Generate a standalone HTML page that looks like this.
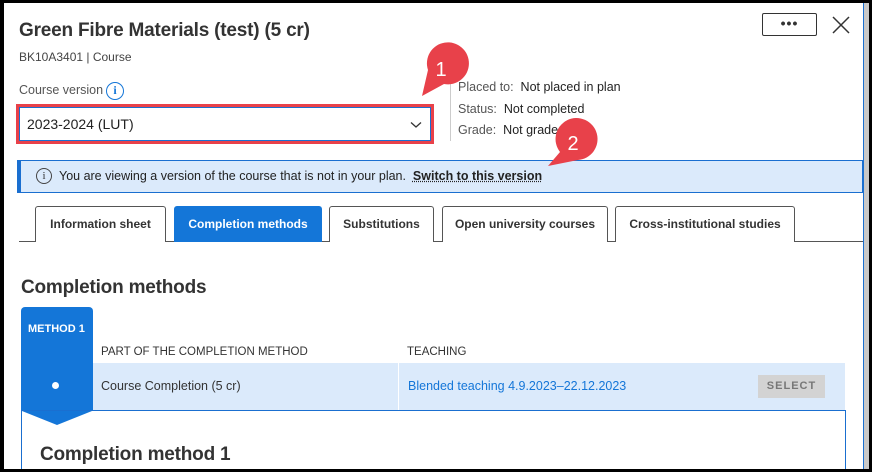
<!DOCTYPE html>
<html><head><style>
*{box-sizing:border-box;margin:0;padding:0}
body{width:872px;height:472px;background:#000;position:relative;overflow:hidden;font-family:"Liberation Sans",sans-serif;color:#333}
.page{position:absolute;left:4px;top:3px;width:860px;height:466px;background:#fff;border-right:1px solid #1a6fd0;overflow:hidden}
.sb{position:absolute;left:864px;top:3px;width:5px;height:466px;background:#c8c8c8}
.a{position:absolute;white-space:nowrap}
.tab{position:absolute;top:203px;height:36px;border:1px solid #555;border-bottom:none;border-radius:3px 3px 0 0;font-size:12px;font-weight:bold;text-align:center;line-height:34px;color:#333;background:#fff}
</style></head><body>
<div class="page">
<div class="a" style="left:15px;top:17px;font-size:19px;font-weight:bold;color:#333;letter-spacing:-0.2px">Green Fibre Materials (test) (5 cr)</div>
<div class="a" style="left:15px;top:47px;font-size:12px;color:#444">BK10A3401 | Course</div>
<div class="a" style="left:15px;top:80px;font-size:12.5px;color:#555">Course version</div>
<div class="a" style="left:102px;top:79px;width:18px;height:18px;border:1.5px solid #1476d8;border-radius:50%;color:#1476d8;font-size:12px;font-weight:bold;text-align:center;line-height:15px;font-family:'Liberation Serif',serif">i</div>
<div class="a" style="left:12px;top:101px;width:418px;height:40px;border:3px solid #e8414a"></div>
<div class="a" style="left:15px;top:104px;width:412px;height:34px;border:1px solid #1a6fd0;background:#fff"></div>
<div class="a" style="left:23px;top:113px;font-size:14px;color:#222">2023-2024 (LUT)</div>
<svg class="a" style="left:406px;top:118px" width="12" height="8"><path d="M1 1.5L6 6L11 1.5" stroke="#333" stroke-width="1.3" fill="none"/></svg>
<div class="a" style="left:446px;top:78px;width:1px;height:60px;background:#ccc"></div>
<div class="a" style="left:454px;top:77px;font-size:12.5px;color:#555">Placed to: <span style="color:#222">&nbsp;Not placed in plan</span></div>
<div class="a" style="left:454px;top:99px;font-size:12.5px;color:#555">Status: <span style="color:#222">&nbsp;Not completed</span></div>
<div class="a" style="left:454px;top:120px;font-size:12.5px;color:#555">Grade: <span style="color:#222">&nbsp;Not graded</span></div>
<div class="a" style="left:758px;top:10px;width:55px;height:23px;border:1px solid #333;border-radius:2px;text-align:center;font-size:14px;line-height:18px;font-weight:bold;letter-spacing:1px">•••</div>
<svg class="a" style="left:828px;top:13px" width="18" height="18"><path d="M1 1L17 17M17 1L1 17" stroke="#333" stroke-width="1.5"/></svg>
<div class="a" style="left:13px;top:157px;width:846px;height:33px;background:#dbeafb;border:1px solid #1a6fd0;border-left:4px solid #1a6fd0"></div>
<div class="a" style="left:32px;top:165px;width:16px;height:16px;border:1px solid #444;border-radius:50%;font-size:11px;text-align:center;line-height:14px;font-family:'Liberation Serif',serif">i</div>
<div class="a" style="left:55px;top:166px;font-size:12.5px;color:#222">You are viewing a version of the course that is not in your plan. &nbsp;<b style="text-decoration:underline dotted">Switch to this version</b></div>
<div class="a" style="left:15px;top:238px;width:845px;height:1px;background:#555"></div>
<div class="tab" style="left:31px;width:131px">Information sheet</div>
<div class="tab" style="left:170px;width:148px;background:#1476d8;border-color:#1476d8;color:#fff">Completion methods</div>
<div class="tab" style="left:325px;width:105px">Substitutions</div>
<div class="tab" style="left:438px;width:166px">Open university courses</div>
<div class="tab" style="left:611px;width:180px">Cross-institutional studies</div>
<div class="a" style="left:17px;top:274px;font-size:19px;font-weight:bold;color:#333;letter-spacing:-0.2px">Completion methods</div>
<div class="a" style="left:17px;top:304px;width:72px;height:104px;background:#1476d8;border-radius:4px 4px 0 0"></div>
<div class="a" style="left:24px;top:320px;font-size:11px;font-weight:bold;color:#fff">METHOD 1</div>
<div class="a" style="left:97px;top:343px;font-size:11.5px;color:#333">PART OF THE COMPLETION METHOD</div>
<div class="a" style="left:403px;top:343px;font-size:11.5px;color:#333">TEACHING</div>
<div class="a" style="left:89px;top:360px;width:752px;height:47px;background:#dbeafb"></div>
<div class="a" style="left:394px;top:360px;width:1px;height:47px;background:#fff"></div>
<div class="a" style="left:48px;top:379px;width:7px;height:7px;background:#fff;border-radius:50%"></div>
<div class="a" style="left:97px;top:376px;font-size:12.5px;color:#333">Course Completion (5 cr)</div>
<div class="a" style="left:404px;top:376px;font-size:12.5px;color:#1476d8">Blended teaching 4.9.2023–22.12.2023</div>
<div class="a" style="left:754px;top:372px;width:67px;height:23px;background:#d3d3d3;font-size:11px;font-weight:bold;color:#777;text-align:center;line-height:23px;letter-spacing:1px">SELECT</div>
<div class="a" style="left:17px;top:407px;width:825px;height:70px;border:1px solid #1a6fd0"></div>
<svg class="a" style="left:18px;top:408px" width="72" height="16"><path d="M0 0H70L35 14Z" fill="#1476d8"/></svg>
<div class="a" style="left:36px;top:441px;font-size:19px;font-weight:bold;color:#333;letter-spacing:-0.2px">Completion method 1</div>
</div>
<div class="sb"></div>
<svg class="a" style="left:0;top:0" width="872" height="472">
<path d="M422 96 L428 70 A21 21 0 1 1 444 84 Z" fill="#e8414a"/>
<text x="441" y="76" font-family="Liberation Sans" font-size="20" fill="#fff" text-anchor="middle">1</text>
<path d="M548 166 L560 152 A21 21 0 1 1 578 160 Z" fill="#e8414a"/>
<text x="573" y="150" font-family="Liberation Sans" font-size="20" fill="#fff" text-anchor="middle">2</text>
</svg>
</body></html>
